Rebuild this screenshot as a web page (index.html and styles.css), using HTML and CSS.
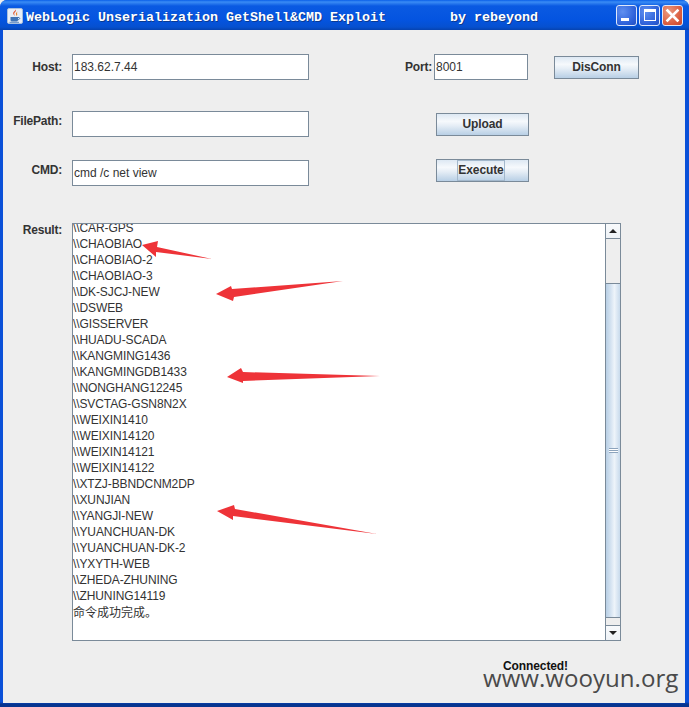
FILE: index.html
```html
<!DOCTYPE html>
<html lang="en">
<head>
<meta charset="utf-8">
<title>WebLogic Unserialization GetShell&amp;CMD Exploit</title>
<link rel="stylesheet" href="styles.css">
</head>
<body>
<div class="window">
  <header class="titlebar">
    <svg class="app-icon" viewBox="0 0 16 16" width="16" height="16">
      <rect x="0.5" y="0.5" width="15" height="15" rx="1.5" fill="#e8eef7" stroke="#a9bfdc"/>
      <path d="M8.5 1.5c1.5 2-2 3-1.2 5 .3.8 1 1.3 1 1.3-.9-.3-2.4-1.3-2.1-2.8.3-1.500 2.200-1.700 2.300-3.500z" fill="#e0502a"/>
      <path d="M10.500 3.500c-1 1-2 1.500-1.500 3 .2.600.400 1 .2 1.500.8-.5 1.300-1 1-2-.2-.8-.2-1.500.3-2.500z" fill="#e8842a"/>
      <path d="M3.500 9h7.500v3c0 1-1 1.500-2 1.500H5.500c-1 0-2-.5-2-1.500z" fill="#3f73b5"/>
      <path d="M11 9.500c2-.5 2.500 1.800 0 2.300" fill="none" stroke="#3f73b5"/>
      <path d="M2.500 14.300h9.500" stroke="#5a87c0"/>
    </svg>
    <span class="title">WebLogic Unserialization GetShell&amp;CMD Exploit        by rebeyond</span>
    <div class="caption-btns">
      <div class="cap cap-min"><span class="min-bar"></span></div>
      <div class="cap cap-max"><span class="max-box"></span></div>
      <div class="cap cap-close">
        <svg viewBox="0 0 21 21" width="21" height="21"><path d="M5.500 5.500l10 10M15.500 5.500l-10 10" stroke="#fff" stroke-width="2.600" stroke-linecap="square"/></svg>
      </div>
    </div>
  </header>

  <main class="content">
    <div class="row row-host">
      <label class="lbl">Host:</label>
      <div class="field field-main">183.62.7.44</div>
      <label class="lbl lbl-port">Port:</label>
      <div class="field field-port">8001</div>
      <button class="btn btn-disconn">DisConn</button>
    </div>
    <div class="row row-file">
      <label class="lbl lbl-raised">FilePath:</label>
      <div class="field field-main"></div>
      <button class="btn btn-action">Upload</button>
    </div>
    <div class="row row-cmd">
      <label class="lbl lbl-raised">CMD:</label>
      <div class="field field-main">cmd /c net view</div>
      <button class="btn btn-action btn-raised"><span class="focus">Execute</span></button>
    </div>
    <div class="row row-result">
      <label class="lbl lbl-result">Result:</label>
      <div class="output">
        <div class="output-text">
          <div>\\CAR-GPS</div>
          <div>\\CHAOBIAO</div>
          <div>\\CHAOBIAO-2</div>
          <div>\\CHAOBIAO-3</div>
          <div>\\DK-SJCJ-NEW</div>
          <div>\\DSWEB</div>
          <div>\\GISSERVER</div>
          <div>\\HUADU-SCADA</div>
          <div>\\KANGMING1436</div>
          <div>\\KANGMINGDB1433</div>
          <div>\\NONGHANG12245</div>
          <div>\\SVCTAG-GSN8N2X</div>
          <div>\\WEIXIN1410</div>
          <div>\\WEIXIN14120</div>
          <div>\\WEIXIN14121</div>
          <div>\\WEIXIN14122</div>
          <div>\\XTZJ-BBNDCNM2DP</div>
          <div>\\XUNJIAN</div>
          <div>\\YANGJI-NEW</div>
          <div>\\YUANCHUAN-DK</div>
          <div>\\YUANCHUAN-DK-2</div>
          <div>\\YXYTH-WEB</div>
          <div>\\ZHEDA-ZHUNING</div>
          <div>\\ZHUNING14119</div>
          <div class="cjk">命令成功完成。</div>
        </div>
        <div class="scrollbar">
          <div class="sb-btn"><span class="tri-up"></span></div>
          <div class="sb-gap-top"></div>
          <div class="sb-thumb"><span class="grip"></span></div>
          <div class="sb-gap-bottom"></div>
          <div class="sb-btn sb-btn-down"><span class="tri-down"></span></div>
        </div>
      </div>
    </div>
    <div class="status">Connected!</div>
  </main>

  <svg class="arrows" viewBox="0 0 689 707" width="689" height="707">
    <polygon points="142,245 158,241 157,247 212,259 156,252 156,257"/>
    <polygon points="216,294 231,286 232,289 343,281 234,297 233,301"/>
    <polygon points="227,377 241,368 243,372 380,376 243,381 243,383"/>
    <polygon points="217,511 234,505 235,509 377,534 233,516 233,520"/>
  </svg>
  <div class="watermark">www.wooyun.org</div>
</div>
</body>
</html>
```
FILE: styles.css
```css
* { box-sizing: border-box; }
html, body { margin: 0; padding: 0; }
body {
  width: 689px;
  height: 707px;
  overflow: hidden;
  font-family: "Liberation Sans", Arial, sans-serif;
  font-size: 12px;
  color: #333;
  background: #eee;
}
.window {
  position: relative;
  width: 689px;
  height: 707px;
  display: flex;
  flex-direction: column;
  background: linear-gradient(#0a50d8 0, #0a50d8 702px, #07348f 704px, #07348f 707px);
  border-radius: 7px 7px 0 0;
  overflow: hidden;
}
.titlebar {
  flex: none;
  height: 30px;
  display: flex;
  align-items: center;
  padding: 0 6px 0 7px;
  background: linear-gradient(#0a5fe8 0, #3a8cf5 2px, #0a5ae2 6px, #0454e0 20px, #0650cf 27px, #0643b0 30px);
}
.app-icon { flex: none; margin-top: 1px; }
.title {
  margin-left: 3px;
  margin-top: 5px;
  font-family: "Liberation Mono", monospace;
  font-weight: 700;
  font-size: 13.33px;
  color: #fff;
  white-space: pre;
  text-shadow: 1px 1px 0 #0a3a90;
}
.caption-btns {
  margin-left: auto;
  display: flex;
  gap: 2px;
}
.cap {
  width: 21px;
  height: 21px;
  border: 1px solid #dfe8fb;
  border-radius: 3px;
  background: radial-gradient(circle at 30% 30%, #5f8ff0, #2c5fd8 70%, #2450c0);
  position: relative;
}
.cap-close {
  display: flex;
  align-items: center;
  justify-content: center;
  background: radial-gradient(circle at 30% 30%, #ea9a80, #d9583a 70%, #c8452c);
}
.cap-close svg { flex: none; margin: -1px; }
.min-bar {
  position: absolute;
  left: 4px;
  bottom: 4px;
  width: 8px;
  height: 3px;
  background: #fff;
}
.max-box {
  position: absolute;
  left: 4px;
  top: 3px;
  width: 12px;
  height: 12px;
  border: 1px solid #fff;
  border-top-width: 3px;
}
.content {
  flex: none;
  height: 673px;
  margin: 0 4px 4px 3px;
  padding-top: 24px;
  background: #eee;
  display: flex;
  flex-direction: column;
}
.row {
  display: flex;
  align-items: center;
  flex: none;
}
.row-host, .row-file, .row-cmd { height: 26px; }
.row-file { margin-top: 31px; }
.row-cmd { margin-top: 23px; }
.row-result { margin-top: 37px; align-items: flex-start; }
.lbl {
  flex: none;
  width: 59px;
  margin-right: 10px;
  text-align: right;
  font-weight: 700;
  font-size: 12px;
  line-height: 14px;
  letter-spacing: -0.2px;
  color: #333;
}
.lbl-raised { margin-top: -6px; }
.lbl-port {
  width: 120px;
  margin-left: 3px;
  margin-right: 2px;
}
.row-result .lbl { margin-top: 0; }
.field {
  flex: none;
  height: 26px;
  background: #fff;
  border: 1px solid #7a8a99;
  padding: 0 1px;
  font-size: 12px;
  line-height: 24px;
  color: #333;
}
.field-main { width: 237px; }
.field-port { width: 94px; }
.btn {
  flex: none;
  height: 23px;
  padding: 0;
  font-family: inherit;
  font-weight: 700;
  font-size: 12px;
  letter-spacing: -0.1px;
  color: #333;
  border: 1px solid #7a8a99;
  background: linear-gradient(#dde8f3 0, #f6f9fc 35%, #e6eef6 55%, #b8cfe5 100%);
}
.btn-disconn { width: 85px; margin-left: 26px; }
.btn-action { width: 93px; margin-left: 127px; }
.btn-raised {
  margin-top: -5px;
  display: flex;
  align-items: stretch;
  justify-content: center;
}
.focus {
  display: block;
  width: 48px;
  line-height: 18px;
  margin-left: -3px;
  height: 21px;
  border: 1px solid #a3b8cc;
}
.output {
  position: relative;
  flex: none;
  width: 549px;
  height: 418px;
  background: #fff;
  border: 1px solid #7a8a99;
  overflow: hidden;
  display: flex;
}
.output-text {
  flex: 1;
  margin-top: -4px;
  font-size: 12px;
  line-height: 16px;
  letter-spacing: -0.1px;
  color: #333;
}
.cjk {
  font-family: "Noto Sans CJK SC", "Liberation Sans", sans-serif;
  letter-spacing: 0;
}
.scrollbar {
  flex: none;
  width: 15px;
  height: 416px;
  border-left: 1px solid #7a8a99;
  display: flex;
  flex-direction: column;
  background: #eee;
}
.sb-btn {
  flex: none;
  height: 15px;
  border-bottom: 1px solid #7a8a99;
  background: linear-gradient(#f8fafc, #eef2f6);
  display: flex;
  align-items: center;
  justify-content: center;
}
.sb-btn-down { border-top: 1px solid #7a8a99; border-bottom: 0; }
.tri-up, .tri-down {
  width: 0;
  height: 0;
  border-left: 4px solid transparent;
  border-right: 4px solid transparent;
}
.tri-up { border-bottom: 4px solid #222; }
.tri-down { border-top: 4px solid #222; }
.sb-gap-top { flex: none; height: 44px; }
.sb-thumb {
  flex: none;
  height: 335px;
  border-top: 1px solid #7a8a99;
  border-bottom: 1px solid #7a8a99;
  background: linear-gradient(90deg, #b8cfe5 0, #d5e3f1 35%, #eef4fa 60%, #c8daec 100%);
  display: flex;
  align-items: center;
  justify-content: center;
}
.grip {
  width: 9px;
  height: 5px;
  border-top: 1px solid #8da4bd;
  border-bottom: 1px solid #8da4bd;
  background: linear-gradient(#fff 1px, #8da4bd 1px, #8da4bd 2px, #fff 2px);
}
.sb-gap-bottom { flex: 1; }
.status {
  flex: none;
  margin: 18px 0 0 500px;
  font-weight: 700;
  font-size: 12px;
  line-height: 14px;
  letter-spacing: -0.1px;
  color: #111;
}
.arrows {
  position: absolute;
  left: 0;
  top: 0;
  pointer-events: none;
}
.arrows polygon { fill: #ee3338; }
.watermark {
  position: absolute;
  left: 483px;
  top: 661px;
  font-family: "Open Sans", sans-serif;
  font-size: 24.1px;
  line-height: 34px;
  color: #4a4a4a;
  white-space: nowrap;
}
```
